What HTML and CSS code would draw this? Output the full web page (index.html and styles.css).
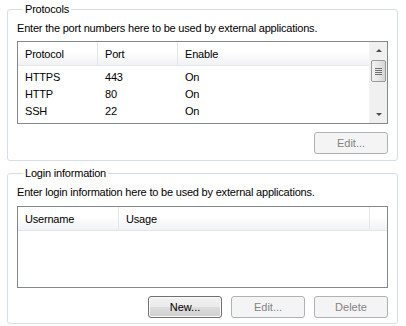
FILE: index.html
```html
<!DOCTYPE html>
<html lang="en">
<head>
  <meta charset="UTF-8">
  <title>External access</title>
  <link rel="stylesheet" href="styles.css">
</head>
<body>
  <fieldset class="group group-protocols">
    <legend>Protocols</legend>
    <p class="hint">Enter the port numbers here to be used by external applications.</p>
    <div class="list list-protocols">
      <div class="list-body">
        <div class="list-head">
          <span class="col col-proto">Protocol</span>
          <span class="col col-port">Port</span>
          <span class="col col-enable">Enable</span>
        </div>
        <div class="row"><span class="col col-proto">HTTPS</span><span class="col col-port">443</span><span class="col col-enable">On</span></div>
        <div class="row"><span class="col col-proto">HTTP</span><span class="col col-port">80</span><span class="col col-enable">On</span></div>
        <div class="row"><span class="col col-proto">SSH</span><span class="col col-port">22</span><span class="col col-enable">On</span></div>
      </div>
      <div class="scrollbar">
        <div class="sb-btn"><span class="arrow arrow-up"></span></div>
        <div class="sb-track">
          <div class="sb-thumb"><span class="grip"></span></div>
        </div>
        <div class="sb-btn"><span class="arrow arrow-down"></span></div>
      </div>
    </div>
    <div class="actions">
      <button class="btn" disabled>Edit...</button>
    </div>
  </fieldset>

  <fieldset class="group group-login">
    <legend>Login information</legend>
    <p class="hint">Enter login information here to be used by external applications.</p>
    <div class="list list-login">
      <div class="list-body">
        <div class="list-head">
          <span class="col col-user">Username</span>
          <span class="col col-usage">Usage</span>
          <span class="col col-fill"></span>
        </div>
      </div>
    </div>
    <div class="actions">
      <button class="btn">New...</button>
      <button class="btn" disabled>Edit...</button>
      <button class="btn" disabled>Delete</button>
    </div>
  </fieldset>
</body>
</html>
```

FILE: styles.css
```css
* { box-sizing: border-box; }
body { margin: 0; padding: 3px 8px 0 7px; background: #fff; color: #000; font-family: "Liberation Sans", Arial, sans-serif; font-size: 11px; letter-spacing: -0.2px; }

.group { margin: 0; border: 1px solid #d5dfe5; border-radius: 3px; padding: 0 9px 5px 9px; }
.group legend { padding: 0 2px; margin-left: 6px; line-height: 13px; }
.group-protocols { padding-bottom: 6px; }
.group-login { margin-top: 6px; }

.hint { margin: 5px 0 0; line-height: 15px; }

.list { display: flex; border: 1px solid #828790; margin-top: 5px; background: #fff; }
.list-body { flex: 1; }
.list-protocols { height: 83px; }
.list-login { height: 82px; margin-top: 6px; }

.list-head { display: flex; height: 24px; align-items: center; background: linear-gradient(#fff 0%, #fff 40%, #f1f2f4 100%); border-bottom: 1px solid #e3e7ec; }
.list-head .col { border-right: 1px solid #e3e7ec; height: 100%; display: flex; align-items: center; }
.list-head .col:last-child { border-right: none; }

.col { padding-left: 7px; flex: none; }
.col-proto { width: 80px; }
.col-port { width: 80px; }
.col-enable { flex: 1; }
.col-user { width: 101px; }
.col-usage { width: 251px; }
.list-head .col-usage { border-right: 1px solid #e3e7ec; }
.col-fill { flex: 1; }

.row { display: flex; height: 17px; align-items: center; }
.list-head + .row { margin-top: 2px; }

.scrollbar { width: 18px; display: flex; flex-direction: column; background: #f0f0f0; border-left: 1px solid #f3f3f3; }
.sb-btn { height: 17px; display: flex; align-items: center; justify-content: center; }
.sb-track { flex: 1; padding-top: 1px; }
.sb-thumb { height: 22px; margin: 0 1px; border: 1px solid #9a9a9a; border-radius: 2px; background: linear-gradient(90deg, #f3f3f3, #e6e6e6 50%, #d5d5d5); display: flex; align-items: center; justify-content: center; }
.grip { width: 7px; height: 7px; background: repeating-linear-gradient(#6f6f6f 0 1px, transparent 1px 2px); }
.arrow { width: 0; height: 0; border-left: 3px solid transparent; border-right: 3px solid transparent; }
.arrow-up { border-bottom: 3px solid #4d4d4d; }
.arrow-down { border-top: 3px solid #4d4d4d; }

.actions { display: flex; justify-content: flex-end; gap: 9px; margin-top: 8px; }
.btn { width: 74px; height: 22px; font: inherit; color: #000; border: 1px solid #707070; border-radius: 3px; background: linear-gradient(#f2f2f2 0%, #ebebeb 49%, #dddddd 50%, #cfcfcf 100%); box-shadow: inset 0 0 0 1px #fbfbfb; padding: 0; }
.btn:disabled { color: #838383; border-color: #adb2b5; background: #f4f4f4; box-shadow: none; }
```
